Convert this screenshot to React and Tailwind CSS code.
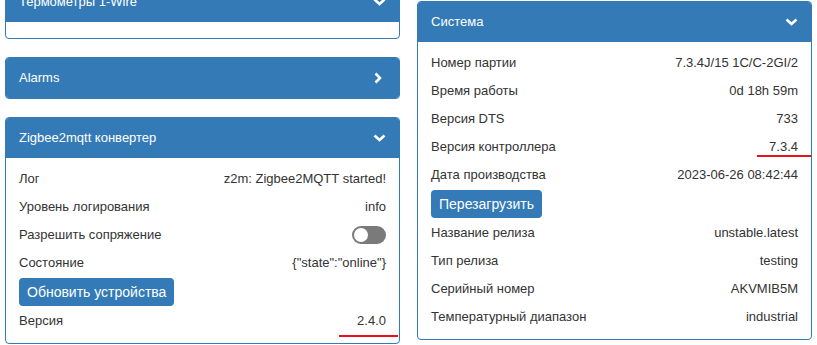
import React from "react";

const zigbeeRows = [
  { label: "Лог", value: "z2m: Zigbee2MQTT started!" },
  { label: "Уровень логирования", value: "info" },
  { label: "Разрешить сопряжение", toggle: true },
  { label: "Состояние", value: '{"state":"online"}' },
  { button: "Обновить устройства" },
  { label: "Версия", value: "2.4.0", mark: "left" },
];

const systemRows = [
  { label: "Номер партии", value: "7.3.4J/15 1C/C-2GI/2" },
  { label: "Время работы", value: "0d 18h 59m" },
  { label: "Версия DTS", value: "733" },
  { label: "Версия контроллера", value: "7.3.4", mark: "right" },
  { label: "Дата производства", value: "2023-06-26 08:42:44" },
  { button: "Перезагрузить" },
  { label: "Название релиза", value: "unstable.latest" },
  { label: "Тип релиза", value: "testing" },
  { label: "Серийный номер", value: "AKVMIB5M" },
  { label: "Температурный диапазон", value: "industrial" },
];

function Chevron({ right }) {
  return right ? (
    <svg width="8" height="12" viewBox="0 0 8 12" className="mr-[4px]">
      <polyline points="1.5,1.5 6,6 1.5,10.5" fill="none" stroke="white" strokeWidth="2.6" />
    </svg>
  ) : (
    <svg width="13" height="8" viewBox="0 0 13 8">
      <polyline points="1.5,1.5 6.5,6 11.5,1.5" fill="none" stroke="white" strokeWidth="2.6" />
    </svg>
  );
}

function Toggle() {
  return (
    <div className="w-[34px] h-[18px] rounded-full bg-[#7a7a7a] flex items-center px-[2px]">
      <div className="w-[14px] h-[14px] rounded-full bg-white" />
    </div>
  );
}

function Row({ row }) {
  if (row.button) {
    return (
      <div className="h-[30px] flex items-center">
        <button className="h-[28px] px-[8px] rounded-[4px] bg-[#337ab7] text-white text-[14px]">
          {row.button}
        </button>
      </div>
    );
  }
  return (
    <div className="relative h-[28px] flex items-center justify-between">
      <span>{row.label}</span>
      {row.toggle ? <Toggle /> : <span>{row.value}</span>}
      {row.mark === "left" && (
        <div className="absolute right-[-12px] top-[28px] w-[59px] h-[2px] bg-[#e8101a]" />
      )}
      {row.mark === "right" && (
        <div className="absolute right-[-13px] top-[22px] w-[54px] h-[2px] bg-[#e8101a]" />
      )}
    </div>
  );
}

function Panel({ title, rows, collapsed, empty }) {
  return (
    <div className="border border-[#337ab7] rounded-[4px] overflow-hidden mb-[18px]">
      <div className="h-[40px] bg-[#337ab7] text-white flex items-center justify-between px-[13px]">
        <span>{title}</span>
        <Chevron right={collapsed} />
      </div>
      {empty && <div className="h-[16px]" />}
      {rows && (
        <div className="px-[13px] pt-[7px] pb-[8px]">
          {rows.map((r, i) => (
            <Row key={i} row={r} />
          ))}
        </div>
      )}
    </div>
  );
}

export default function App() {
  return (
    <div className="w-[817px] h-[345px] overflow-hidden bg-white text-[#333] text-[13px] px-[5px] flex gap-[17px] font-['Liberation_Sans',Arial,sans-serif]">
      <div className="w-[396px] -mt-[19px]">
        <Panel title="Термометры 1-Wire" empty />
        <Panel title="Alarms" collapsed />
        <Panel title="Zigbee2mqtt конвертер" rows={zigbeeRows} />
      </div>
      <div className="w-[396px] pt-[1px]">
        <Panel title="Система" rows={systemRows} />
      </div>
    </div>
  );
}
